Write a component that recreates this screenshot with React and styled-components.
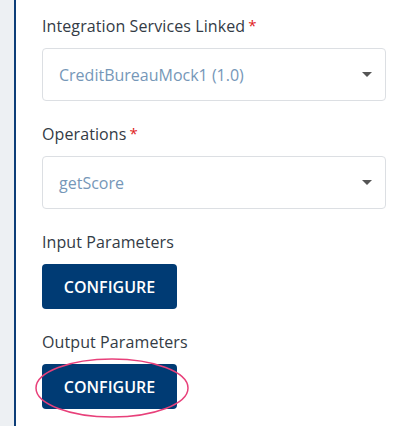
import React from "react";
import styled, { createGlobalStyle } from "styled-components";

const fields = [
  { label: "Integration Services Linked", value: "CreditBureauMock1 (1.0)" },
  { label: "Operations", value: "getScore" },
];

const App = () => {
  return (
    <Page>
      <GlobalStyle />
      <SideStrip />
      <Panel>
        {fields.map((f) => (
          <Field key={f.label}>
            <Label>
              {f.label}
              <Required>*</Required>
            </Label>
            <Select>
              <SelectValue>{f.value}</SelectValue>
              <Caret />
            </Select>
          </Field>
        ))}
        <Field>
          <Label>Input Parameters</Label>
          <ButtonWrap>
            <ConfigureButton>CONFIGURE</ConfigureButton>
          </ButtonWrap>
        </Field>
        <Field>
          <Label>Output Parameters</Label>
          <ButtonWrap>
            <ConfigureButton>CONFIGURE</ConfigureButton>
            <Highlight viewBox="0 0 156 62">
              <ellipse
                cx="78"
                cy="31"
                rx="76"
                ry="29"
                fill="none"
                stroke="#e8407a"
                strokeWidth="1.5"
              />
            </Highlight>
          </ButtonWrap>
        </Field>
      </Panel>
    </Page>
  );
};

export default App;

const GlobalStyle = createGlobalStyle`
  html, body {
    margin: 0;
    padding: 0;
    background: #ffffff;
  }
  body {
    font-family: "Open Sans", "Noto Sans", sans-serif;
  }
`;

const Page = styled.div`
  display: flex;
  width: 406px;
  height: 426px;
  overflow: hidden;
`;

const SideStrip = styled.div`
  width: 14px;
  flex: none;
  background: #edf0f3;
  border-right: 2px solid #0d3e78;
`;

const Panel = styled.div`
  flex: 1;
  display: flex;
  flex-direction: column;
  gap: 21px;
  padding: 14px 20px 0 26px;
`;

const Field = styled.div`
  display: flex;
  flex-direction: column;
  gap: 10px;
`;

const Label = styled.div`
  font-size: 16px;
  line-height: 24px;
  letter-spacing: 0.1px;
  color: #333b45;
`;

const Required = styled.span`
  color: #e0201b;
  font-size: 15px;
  margin-left: 3px;
  vertical-align: top;
  position: relative;
  top: -1px;
`;

const Select = styled.div`
  display: flex;
  align-items: center;
  justify-content: space-between;
  height: 51px;
  padding: 0 13px 0 16px;
  border: 1px solid #dcdfe3;
  border-radius: 4px;
  background: #fff;
`;

const SelectValue = styled.span`
  font-size: 16px;
  color: #7697b8;
`;

const Caret = styled.span`
  width: 0;
  height: 0;
  border-left: 5px solid transparent;
  border-right: 5px solid transparent;
  border-top: 5px solid #555;
`;

const ButtonWrap = styled.div`
  position: relative;
  align-self: flex-start;
`;

const ConfigureButton = styled.button`
  width: 135px;
  height: 45px;
  border: none;
  border-radius: 4px;
  background: #003b74;
  color: #ffffff;
  font-family: "Open Sans", "Noto Sans", sans-serif;
  font-size: 16px;
  font-weight: 600;
  cursor: pointer;
`;

const Highlight = styled.svg`
  position: absolute;
  left: -8px;
  top: -7px;
  width: 156px;
  height: 62px;
  pointer-events: none;
`;
